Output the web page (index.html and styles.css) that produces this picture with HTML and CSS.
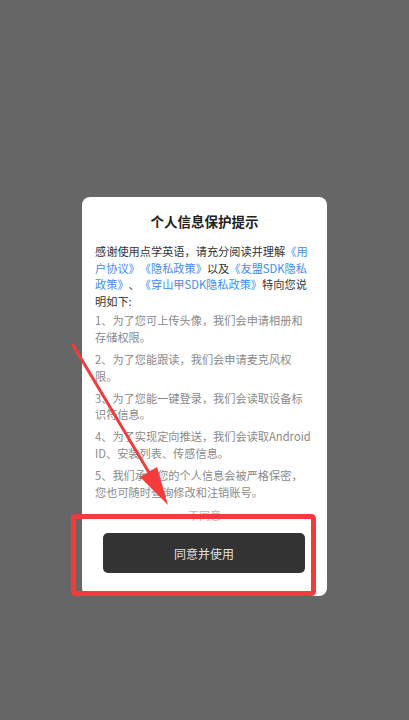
FILE: index.html
```html
<!DOCTYPE html>
<html lang="zh-CN">
<head>
<meta charset="utf-8">
<title>个人信息保护提示</title>
<link rel="stylesheet" href="styles.css">
</head>
<body>
<div class="screen">
  <div class="dialog">
    <h1 class="title">个人信息保护提示</h1>
    <p class="intro">感谢使用点学英语，请充分阅读并理解<a class="link">《用户协议》</a><a class="link">《隐私政策》</a>以及<a class="link">《友盟SDK隐私政策》</a>、<a class="link">《穿山甲SDK隐私政策》</a>特向您说明如下:</p>
    <ol class="items">
      <li>1、为了您可上传头像，我们会申请相册和存储权限。</li>
      <li>2、为了您能跟读，我们会申请麦克风权限。</li>
      <li>3、为了您能一键登录，我们会读取设备标识符信息。</li>
      <li>4、为了实现定向推送，我们会读取Android ID、安装列表、传感信息。</li>
      <li>5、我们承诺您的个人信息会被严格保密，您也可随时查询修改和注销账号。</li>
    </ol>
    <div class="decline">不同意</div>
    <button class="agree">同意并使用</button>
  </div>
  <svg class="annotation" width="409" height="720" viewBox="0 0 409 720">
    <line x1="73" y1="345" x2="151" y2="476" stroke="#f43a3a" stroke-width="3" stroke-linecap="round"/>
    <polygon points="168,505 157,467 140,477" fill="#f43a3a"/>
    <rect x="73.5" y="516.5" width="240" height="77" rx="2" fill="none" stroke="#f43a3a" stroke-width="5"/>
  </svg>
</div>
</body>
</html>
```
FILE: styles.css
```css
* { box-sizing: border-box; }
html, body {
  margin: 0;
  padding: 0;
  background: #666666;
}
body {
  font-family: "Noto Sans CJK SC", "Noto Sans", sans-serif;
  text-spacing-trim: space-all;
  font-kerning: none;
}
.screen {
  position: relative;
  width: 409px;
  height: 720px;
  overflow: hidden;
  display: flex;
  flex-direction: column;
  align-items: center;
  padding-top: 197px;
}
.dialog {
  width: 245px;
  background: #ffffff;
  border-radius: 8px;
  padding: 13px 16px 23px 13px;
  display: flex;
  flex-direction: column;
}
.title {
  margin: 0;
  font-size: 13.5px;
  line-height: 22px;
  font-weight: 700;
  color: #222222;
  text-align: center;
  margin-left: 3px;
}
.intro {
  margin: 11px 0 0;
  font-size: 11.2px;
  line-height: 16.6px;
  color: #333333;
}
.link {
  color: #3f8cf3;
}
.items {
  list-style: none;
  margin: 3px 0 0;
  padding: 0;
  display: flex;
  flex-direction: column;
  gap: 5.5px;
}
.items li {
  font-size: 11.2px;
  line-height: 16.6px;
  color: #8a8a8a;
}
.decline {
  margin-top: 7px;
  font-size: 11px;
  line-height: 16px;
  color: #b8b8b8;
  text-align: center;
  margin-left: 3px;
}
.agree {
  margin: 10px 0 0 8px;
  width: 202px;
  height: 40px;
  border: none;
  border-radius: 5px;
  background: #333333;
  color: #e2e2e2;
  font-family: inherit;
  font-size: 12px;
}
.annotation {
  position: absolute;
  left: 0;
  top: 0;
  pointer-events: none;
}
```
